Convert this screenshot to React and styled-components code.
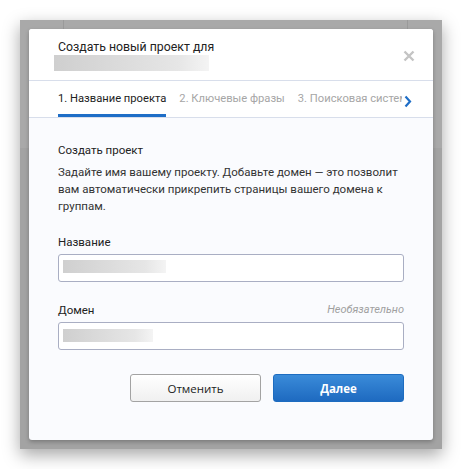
import React from 'react'
import styled, { createGlobalStyle } from 'styled-components'

const Global = createGlobalStyle`
  body {
    margin: 0;
    background: #ffffff;
    font-family: Roboto, 'Liberation Sans', sans-serif;
  }
`

const Page = styled.div`
  padding: 20px;
  width: 422px;
`

const Backdrop = styled.div`
  width: 404px;
  height: 411px;
  padding: 9px;
  background:
    linear-gradient(to right, transparent 43px, #9a9a9a 43px, #9a9a9a 44px, transparent 44px),
    linear-gradient(to right, transparent 387px, #9a9a9a 387px, #9a9a9a 388px, transparent 388px),
    linear-gradient(to bottom, #a9a9a9 0, #a9a9a9 128px, #a3a3a3 128px);
  background-size: 100% 9px, 100% 9px, 100% 100%;
  background-repeat: no-repeat;
  box-shadow: 0 6px 16px rgba(0, 0, 0, 0.35);
`

const Modal = styled.div`
  width: 404px;
  height: 411px;
  background: #fafbfe;
  border-radius: 3px;
  box-shadow: 0 2px 4px rgba(0, 0, 0, 0.25);
  display: flex;
  flex-direction: column;
  overflow: hidden;
`

const Header = styled.div`
  background: #fff;
  padding: 10px 18px 0 25px;
  height: 41px;
  display: flex;
  justify-content: space-between;
  border-bottom: 1px solid #d8deeb;
`

const TitleBlock = styled.div`
  display: flex;
  flex-direction: column;
`

const Title = styled.div`
  font-size: 12.3px;
  color: #222;
  line-height: 16px;
  padding-left: 4px;
`

const Blur = styled.div`
  width: ${p => p.$w}px;
  height: ${p => p.$h}px;
  margin-top: ${p => p.$top || 0}px;
  background: linear-gradient(to right, #cfcfcf, #e6e6e6 80%, #f4f4f4);
  filter: blur(0.6px);
`

const Close = styled.div`
  margin-top: 8px;
  width: 12px;
  height: 12px;
`

const Tabs = styled.div`
  background: #fff;
  height: 36px;
  padding: 0 20px 0 29px;
  display: flex;
  align-items: stretch;
  border-bottom: 1px solid #d8deeb;
  position: relative;
`

const TabList = styled.div`
  display: flex;
  gap: 13px;
  overflow: hidden;
  width: 344px;
  white-space: nowrap;
`

const Tab = styled.div`
  font-size: 11.2px;
  color: ${p => (p.$active ? '#222' : '#a6a6a6')};
  padding-top: 11px;
  border-bottom: 3px solid ${p => (p.$active ? '#1f6ec7' : 'transparent')};
  flex-shrink: 0;
`

const Arrow = styled.div`
  position: absolute;
  right: 21px;
  top: 12px;
`

const Body = styled.div`
  padding: 24px 29px 0 29px;
  flex: 1;
  display: flex;
  flex-direction: column;
`

const Heading = styled.div`
  font-size: 11.5px;
  color: #222;
  line-height: 16px;
`

const Text = styled.p`
  margin: 6px 0 0;
  font-size: 11.5px;
  line-height: 17px;
  color: #333;
`

const FieldHead = styled.div`
  display: flex;
  justify-content: space-between;
  align-items: center;
  height: 14px;
  line-height: 14px;
  margin-top: ${p => p.$top}px;
`

const Label = styled.div`
  font-size: 11.5px;
  color: #222;
`

const Optional = styled.div`
  font-size: 11px;
  font-style: italic;
  color: #a0a0a0;
`

const Input = styled.div`
  margin-top: 5px;
  border: 1px solid #a9aec3;
  border-radius: 3px;
  background: #fff;
  padding: 5px 0 0 4px;
  box-sizing: border-box;
  height: 28px;
`

const Actions = styled.div`
  display: flex;
  justify-content: flex-end;
  gap: 12px;
  margin-top: 24px;
`

const Button = styled.button`
  width: 131px;
  height: 28px;
  border-radius: 3px;
  font-family: 'Open Sans', 'Liberation Sans', sans-serif;
  font-size: 11.5px;
  cursor: pointer;
  ${p =>
    p.$primary
      ? `
    border: 1px solid #1d6cc0;
    background: linear-gradient(to bottom, #3a8bd9, #1e6ac0);
    color: #fff;
    font-weight: 700;
  `
      : `
    border: 1px solid #a3a3a3;
    background: linear-gradient(to bottom, #ffffff, #f0f0f0);
    color: #222;
  `}
`

export default function App() {
  return (
    <Page>
      <Global />
      <Backdrop>
        <Modal>
          <Header>
            <TitleBlock>
              <Title>Создать новый проект для</Title>
              <Blur $w={155} $h={16} $top={0} />
            </TitleBlock>
            <Close>
              <svg width="12" height="12" viewBox="0 0 12 12">
                <path d="M1.5 1.5 L10.5 10.5 M10.5 1.5 L1.5 10.5" stroke="#c4c4c4" strokeWidth="2.4" />
              </svg>
            </Close>
          </Header>
          <Tabs>
            <TabList>
              <Tab $active>1. Название проекта</Tab>
              <Tab>2. Ключевые фразы</Tab>
              <Tab>3. Поисковая система</Tab>
            </TabList>
            <Arrow>
              <svg width="8" height="13" viewBox="0 0 8 13">
                <path d="M1.5 1.5 L6 6.5 L1.5 11.5" stroke="#1f6ec7" strokeWidth="2.2" fill="none" />
              </svg>
            </Arrow>
          </Tabs>
          <Body>
            <Heading>Создать проект</Heading>
            <Text>
              Задайте имя вашему проекту. Добавьте домен — это позволит вам автоматически
              прикрепить страницы вашего домена к группам.
            </Text>
            <FieldHead $top={20}>
              <Label>Название</Label>
            </FieldHead>
            <Input>
              <Blur $w={103} $h={13} />
            </Input>
            <FieldHead $top={21}>
              <Label>Домен</Label>
              <Optional>Необязательно</Optional>
            </FieldHead>
            <Input>
              <Blur $w={90} $h={13} $top={1} />
            </Input>
            <Actions>
              <Button>Отменить</Button>
              <Button $primary>Далее</Button>
            </Actions>
          </Body>
        </Modal>
      </Backdrop>
    </Page>
  )
}
